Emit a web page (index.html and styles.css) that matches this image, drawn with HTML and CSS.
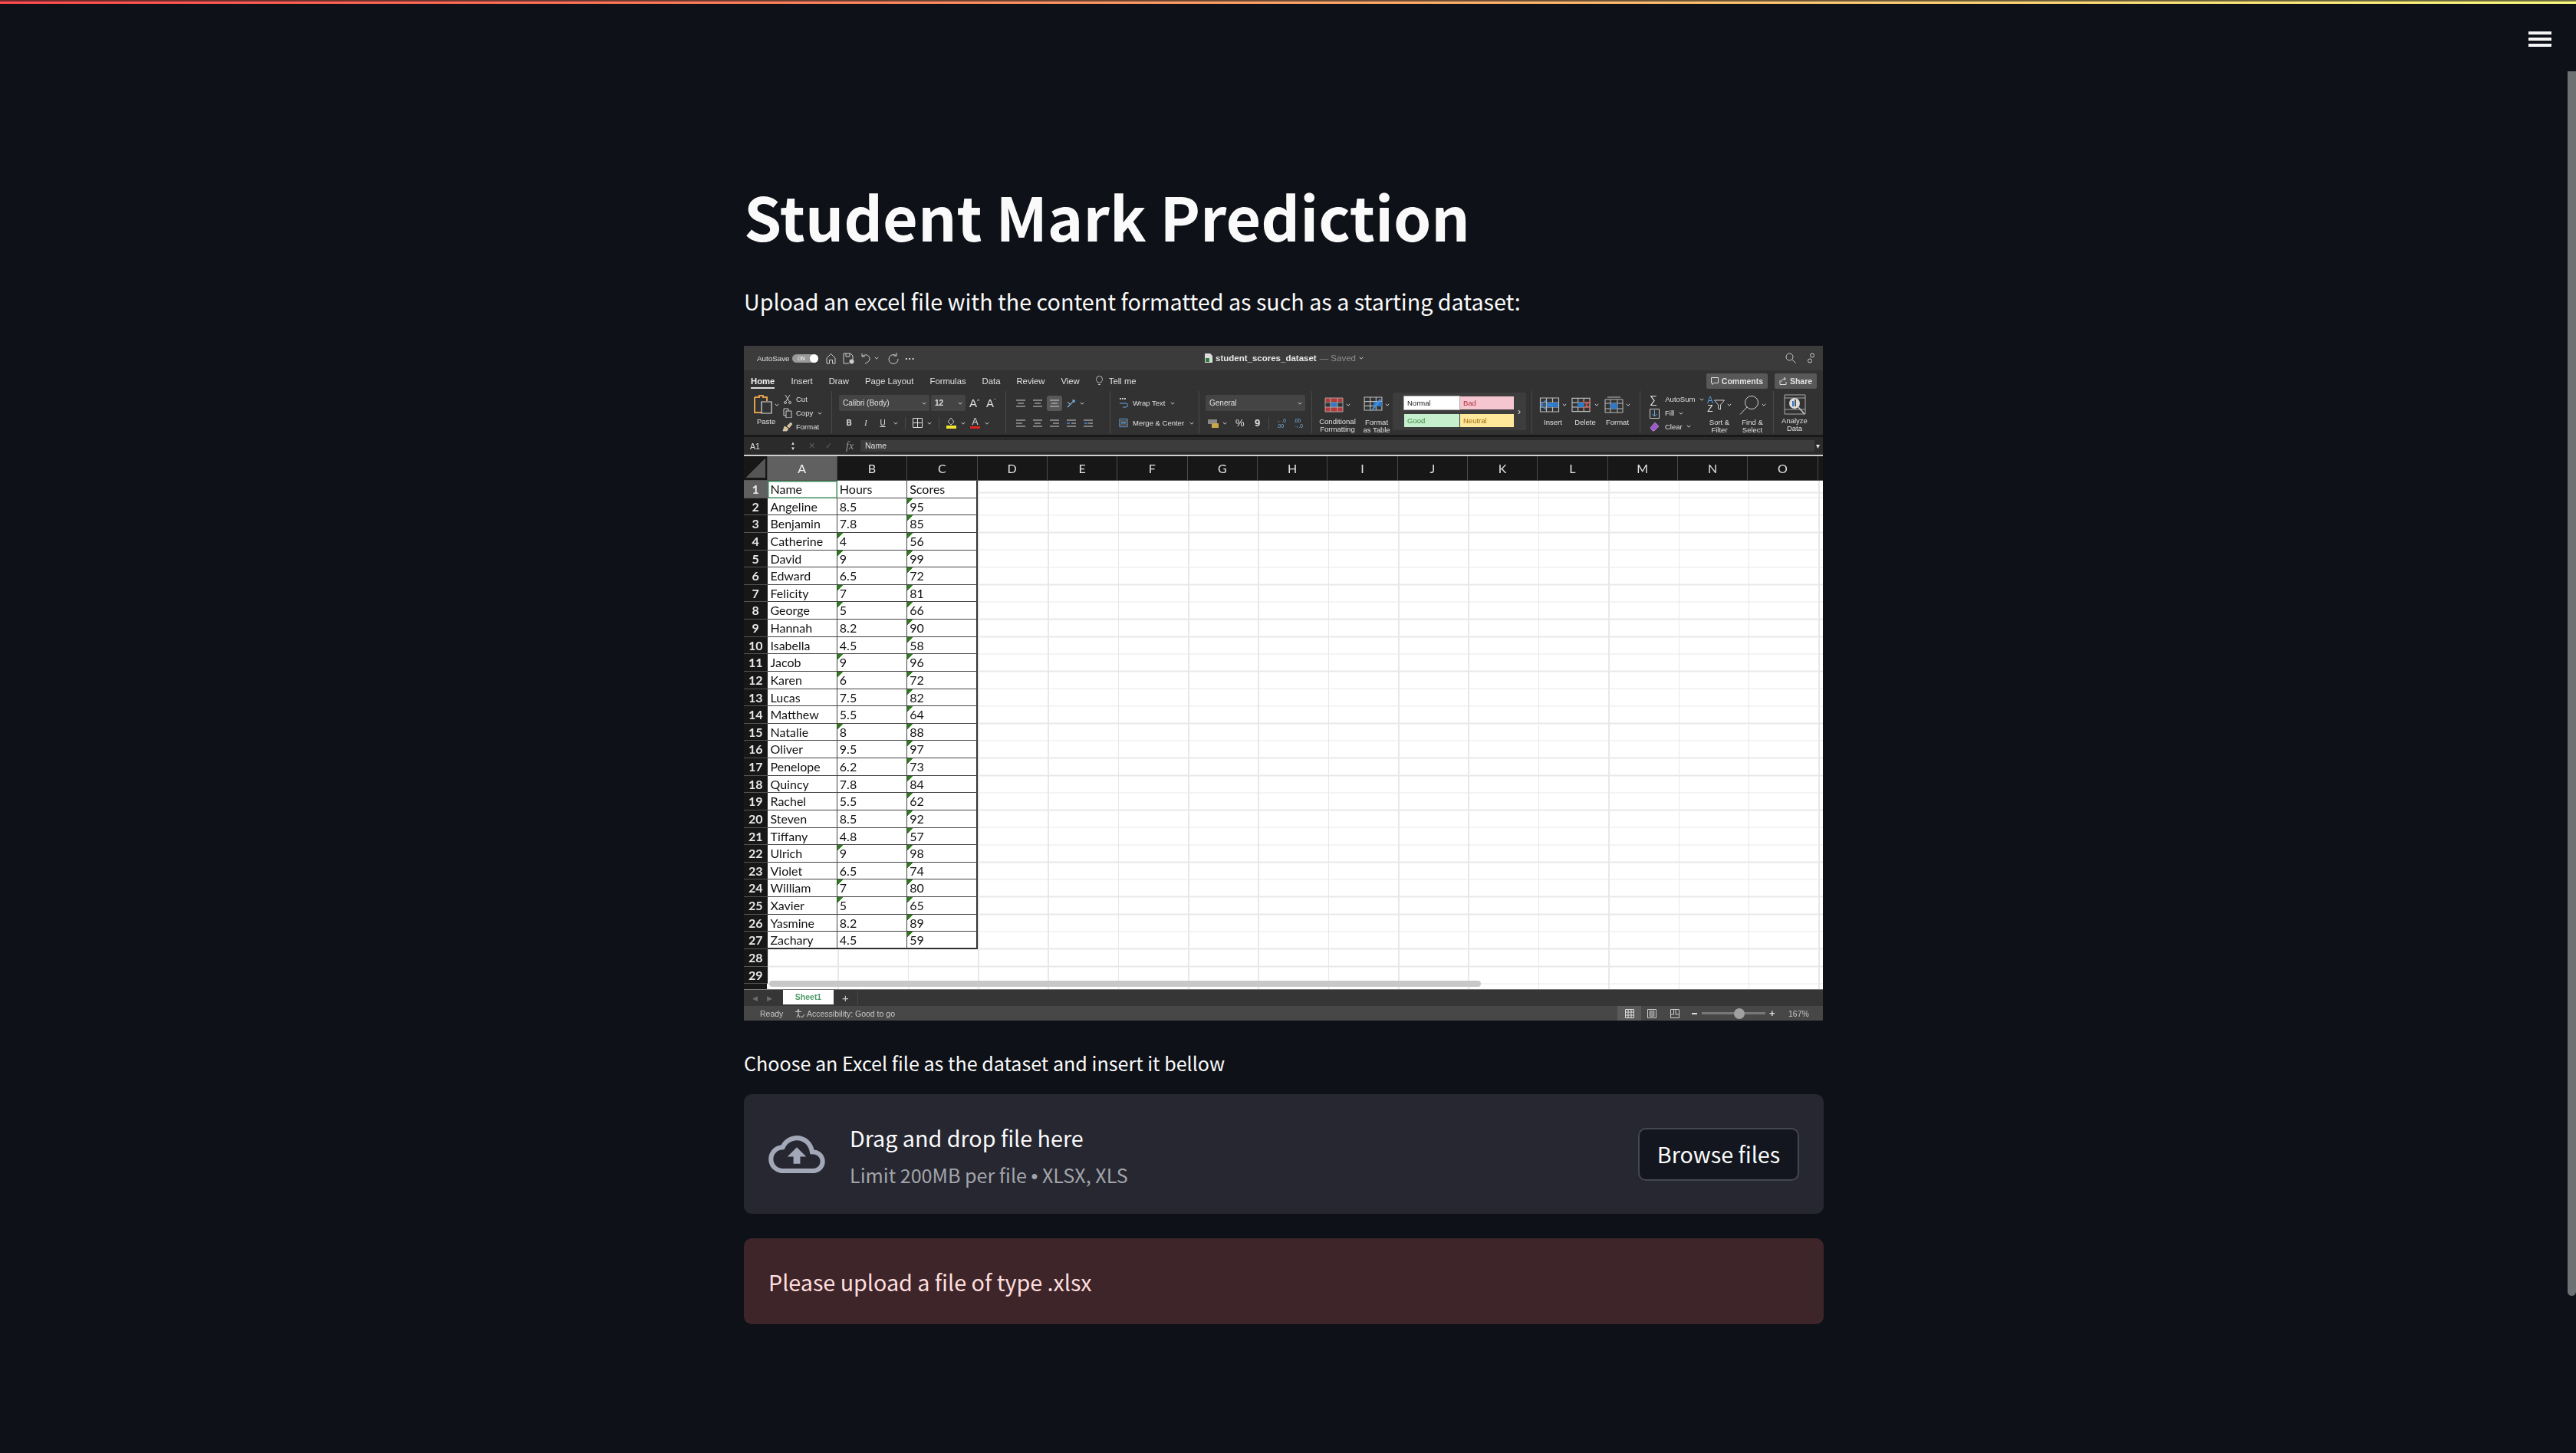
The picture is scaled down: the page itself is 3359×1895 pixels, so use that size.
FILE: index.html
```html
<!DOCTYPE html>
<html>
<head>
    <title>Student Mark Prediction</title>
    <link rel="stylesheet" href="styles.css">
</head>
<body>
    <svg class="defs">
        <symbol id="chev" viewBox="0 0 6 6"><path d="M.8 1.8 3 4.2l2.2-2.4" fill="none" stroke="currentColor" stroke-width="1"/></symbol>
        <symbol id="grid" viewBox="0 0 26 20"><path d="M1 1h24v18H1zM1 7h24M1 13h24M9 1v18M17 1v18" fill="none" stroke="#bbb" stroke-width="1.2"/></symbol>
        <symbol id="a-left" viewBox="0 0 12 12"><path d="M0 2h12M0 6h8M0 10h12" stroke="#ccc" stroke-width="1"/></symbol>
        <symbol id="a-mid" viewBox="0 0 12 12"><path d="M0 2h12M2 6h8M0 10h12" stroke="#ccc" stroke-width="1"/></symbol>
        <symbol id="a-right" viewBox="0 0 12 12"><path d="M0 2h12M4 6h8M0 10h12" stroke="#ccc" stroke-width="1"/></symbol>
    </svg>

    <div class="top-line"></div>
    <div class="top-line-dim"></div>
    <div class="menu-btn"><span></span><span></span><span></span></div>
    <div class="scroll-thumb"></div>

    <div class="app">
        <main class="main">
            <h1>Student Mark Prediction</h1>
            <p class="intro">Upload an excel file with the content formatted as such as a starting dataset:</p>

            <div class="sheet">
                <div class="xl-title">
                    <span class="xl-autosave">AutoSave</span>
                    <span class="xl-toggle"><i>ON</i><b></b></span>
                    <svg class="qa" width="13" height="15" viewBox="0 0 13 15"><path d="M1 7 6.500 1.500 12 7v7H8.500V9.500h-4V14H1z" fill="none" stroke="#ccc"/></svg>
                    <svg class="qa" width="15" height="15" viewBox="0 0 15 15"><path d="M1 1h9l3 3v5M1 1v13h7M4 1v4h5V1" fill="none" stroke="#ccc"/><circle cx="11.500" cy="11.500" r="3" fill="#ccc"/></svg>
                    <svg class="qa" width="12" height="15" viewBox="0 0 12 15"><path d="M1 5c4-4 10-2 10 3 0 3-3 5-6 6M1 1v4h4" fill="none" stroke="#ccc"/></svg>
                    <svg class="chev"><use href="#chev"/></svg>
                    <svg class="qa" width="15" height="15" viewBox="0 0 15 15"><path d="M12 4a6 6 0 1 0 2 4M12 0v4H8" fill="none" stroke="#ccc"/></svg>
                    <span class="xl-dots">···</span>
                    <span class="xl-filename">
                        <svg width="10" height="12" viewBox="0 0 10 12"><path d="M0 0h7l3 3v9H0z" fill="#ddd"/><path d="M1 6h5v5H1z" fill="#2e7d3a"/></svg>
                        <b>student_scores_dataset</b><span>— Saved</span><svg class="chev"><use href="#chev"/></svg>
                    </span>
                    <svg class="qa-search" width="14" height="14" viewBox="0 0 14 14"><circle cx="5.500" cy="5.500" r="4.500" fill="none" stroke="#ccc"/><path d="m9 9 4.500 4.500" stroke="#ccc"/></svg>
                    <svg class="qa-people" width="9" height="14" viewBox="0 0 9 14"><circle cx="6" cy="3.500" r="2.500" fill="none" stroke="#ccc"/><circle cx="3" cy="10.500" r="2.500" fill="none" stroke="#ccc"/></svg>
                </div>

                <div class="xl-tabs">
                    <span class="tab-on">Home</span><span>Insert</span><span>Draw</span><span>Page Layout</span><span>Formulas</span><span>Data</span><span>Review</span><span>View</span>
                    <svg width="9" height="13" viewBox="0 0 9 13"><path d="M2.500 9C1 7 .5 6 .5 4.500a4 4 0 0 1 8 0C8.500 6 8 7 6.500 9zM3 11.500h3" fill="none" stroke="#bbb"/></svg>
                    <span class="tell">Tell me</span>
                    <span class="xl-btn xl-comments">
                        <svg width="10" height="10" viewBox="0 0 10 10"><path d="M.5.500h9v7H4L2 9.500v-2H.5z" fill="none" stroke="#ddd"/></svg>Comments</span>
                    <span class="xl-btn xl-share">
                        <svg width="10" height="10" viewBox="0 0 10 10"><path d="M1 4v5.500h8V6M3 6c0-3 2-4 5-4M6 0l2.500 2L6 4" fill="none" stroke="#ddd"/></svg>Share</span>
                </div>

                <div class="ribbon">
                    <div class="rb-group g-clip">
                        <div class="paste">
                            <div class="paste-top">
                                <svg width="25" height="25" viewBox="0 0 25 25"><path d="M1 3h6V1h5v2h5v5M1 3v20h9" fill="none" stroke="#e2a04a" stroke-width="2"/><path d="M10 9h13v15H10z" fill="#333" stroke="#ddd" stroke-width="1.200"/></svg>
                                <svg class="chev"><use href="#chev"/></svg>
                            </div>
                            <span>Paste</span>
                        </div>
                        <div class="rows3">
                            <div class="rb-line"><svg width="14" height="12" viewBox="0 0 14 12"><path d="m4 0 5 8M10 0 5 8" stroke="#ccc"/><circle cx="4" cy="10" r="1.500" fill="none" stroke="#ccc"/><circle cx="10" cy="10" r="1.500" fill="none" stroke="#ccc"/></svg>Cut</div>
                            <div class="rb-line"><svg width="14" height="13" viewBox="0 0 14 13"><path d="M2 1h6v3M2 1v9h3M5 4h7v9H5z" fill="none" stroke="#ccc"/></svg>Copy <svg class="chev"><use href="#chev"/></svg></div>
                            <div class="rb-line"><svg width="14" height="13" viewBox="0 0 14 13"><path d="m1 12 2-6 5 3-2 3zM6 6l5-5 2 2-4 5" fill="#d9c08a" stroke="#ddd" stroke-width=".7"/></svg>Format</div>
                        </div>
                    </div>

                    <div class="rb-group g-font">
                        <div class="rows2">
                            <div class="rb-row">
                                <span class="rb-box font-name">Calibri (Body)<svg class="chev"><use href="#chev"/></svg></span>
                                <span class="rb-box font-size">12<svg class="chev"><use href="#chev"/></svg></span>
                                <span class="font-grow">A<sup>^</sup></span>
                                <span class="font-shrink">A<sup>ˇ</sup></span>
                            </div>
                            <div class="rb-row font-tools">
                                <span class="ft-b">B</span><span class="ft-i">I</span><span class="ft-u">U</span>
                                <svg class="chev"><use href="#chev"/></svg>
                                <i class="vsep"></i>
                                <svg width="13" height="13" viewBox="0 0 13 13"><path d="M.5.500h12v12H.5zM6.500.500v12M.5 6.500h12" fill="none" stroke="#ddd"/></svg>
                                <svg class="chev"><use href="#chev"/></svg>
                                <i class="vsep"></i>
                                <svg width="13" height="15" viewBox="0 0 13 15"><path d="M6 1 2 6l4 4 4-4z" fill="none" stroke="#ccc"/><path d="M0 11h13v4H0z" fill="#f2e52e"/></svg>
                                <svg class="chev"><use href="#chev"/></svg>
                                <span class="ft-color">A</span>
                                <svg class="chev"><use href="#chev"/></svg>
                            </div>
                        </div>
                    </div>

                    <div class="rb-group g-align">
                        <div class="rows2">
                            <div class="rb-row align-row">
                                <svg><use href="#a-mid"/></svg><svg><use href="#a-mid"/></svg><svg class="hl"><use href="#a-mid"/></svg>
                                <svg width="12" height="12" viewBox="0 0 12 12"><path d="m1 11 9-9M7 2h3v3" fill="none" stroke="#7db7e8" stroke-width="1.200"/><path d="M1 4l3 3" stroke="#ccc"/></svg>
                                <svg class="chev"><use href="#chev"/></svg>
                            </div>
                            <div class="rb-row align-row">
                                <svg><use href="#a-left"/></svg><svg><use href="#a-mid"/></svg><svg><use href="#a-right"/></svg>
                                <svg width="12" height="12" viewBox="0 0 12 12"><path d="M0 2h12M6 6h6M0 10h12" stroke="#ccc"/><path d="M0 6h4" stroke="#4a90d9" stroke-width="1.500"/></svg>
                                <svg width="12" height="12" viewBox="0 0 12 12"><path d="M0 2h12M6 6h6M0 10h12" stroke="#ccc"/><path d="M1 6h4" stroke="#4a90d9" stroke-width="1.500"/></svg>
                            </div>
                        </div>
                    </div>

                    <div class="rb-group g-wrap">
                        <div class="rows2">
                            <div class="rb-row wrap-row">
                                <svg width="12" height="13" viewBox="0 0 12 13"><path d="M1 7h8a2 2 0 0 1 0 5H5" fill="none" stroke="#6aa9df"/><path d="M1 1h8" stroke="#ccc" stroke-width="2" stroke-dasharray="2 1"/></svg>Wrap Text <svg class="chev"><use href="#chev"/></svg>
                            </div>
                            <div class="rb-row wrap-row">
                                <svg width="12" height="13" viewBox="0 0 14 14"><path d="M1 1h12v12H1z" fill="none" stroke="#6aa9df"/><path d="M3 7h8" stroke="#6aa9df" stroke-width="2"/><path d="M1 4h12M1 10h12" stroke="#888"/></svg>Merge &amp; Center <svg class="chev"><use href="#chev"/></svg>
                            </div>
                        </div>
                    </div>

                    <div class="rb-group g-number">
                        <div class="rows2">
                            <div class="rb-row">
                                <span class="rb-box num-format">General<svg class="chev"><use href="#chev"/></svg></span>
                            </div>
                            <div class="rb-row num-tools">
                                <svg width="14" height="12" viewBox="0 0 14 12"><path d="M0 1h12v6H0z" fill="#888"/><path d="M5 6h9v6H5z" fill="#c9a64a"/></svg>
                                <svg class="chev"><use href="#chev"/></svg>
                                <span class="num-pct">%</span>
                                <span class="num-comma">9</span>
                                <i class="vsep"></i>
                                <span class="num-dec">←.0<br>.00</span>
                                <span class="num-dec">.00<br>→.0</span>
                            </div>
                        </div>
                    </div>

                    <div class="rb-group g-styles">
                        <div class="big big-cond">
                            <div class="big-icon">
                                <svg width="25" height="20" viewBox="0 0 25 20"><path d="M1 1h23v18H1z" fill="#333"/><path d="M1 1h23v5H1zM1 13h23v6H1z" fill="#b23a3a"/><path d="M8 7h9v6H8z" fill="#2f78c4"/><path d="M1 1h23v18H1zM1 7h23M1 13h23M8 1v18M17 1v18" fill="none" stroke="#bbb" stroke-width=".8"/></svg>
                                <svg class="chev"><use href="#chev"/></svg>
                            </div>
                            <span>Conditional<br>Formatting</span>
                        </div>
                        <div class="big big-table">
                            <div class="big-icon">
                                <svg width="25" height="22" viewBox="0 0 25 22"><use href="#grid" width="25" height="19"/><path d="M13 7h11v6H13z" fill="#2f78c4"/><path d="m9 20 3-5 9-12 2 2-9 11z" fill="#4a90d9"/></svg>
                                <svg class="chev"><use href="#chev"/></svg>
                            </div>
                            <span>Format<br>as Table</span>
                        </div>
                        <div class="gallery">
                            <div class="gallery-grid">
                                <span class="st-normal">Normal</span><span class="st-bad">Bad</span>
                                <span class="st-good">Good</span><span class="st-neutral">Neutral</span>
                            </div>
                            <span class="gallery-more">›</span>
                        </div>
                    </div>

                    <div class="rb-group g-cells">
                        <div class="big big-cell">
                            <div class="big-icon">
                                <svg width="27" height="20" viewBox="0 0 27 20"><use href="#grid" width="27" height="20"/><path d="M10 7h15v6H10z" fill="#2f78c4"/><path d="M9 4 2 10l7 6" fill="none" stroke="#4a90d9" stroke-width="1.500"/><path d="M2 10h16" stroke="#4a90d9"/></svg>
                                <svg class="chev"><use href="#chev"/></svg>
                            </div>
                            <span>Insert</span>
                        </div>
                        <div class="big big-cell">
                            <div class="big-icon">
                                <svg width="27" height="20" viewBox="0 0 27 20"><use href="#grid" width="25" height="20"/><path d="M8 7h9v6H8z" fill="#2f78c4"/><path d="m15 4 10 12M25 4 15 16" stroke="#d04a3a" stroke-width="1.300"/></svg>
                                <svg class="chev"><use href="#chev"/></svg>
                            </div>
                            <span>Delete</span>
                        </div>
                        <div class="big big-cell">
                            <div class="big-icon">
                                <svg width="25" height="22" viewBox="0 0 25 22"><path d="M4 1h17" stroke="#bbb"/><path d="M1 4h23v17H1zM1 9h23M1 16h23M8 4v17M17 4v17" fill="none" stroke="#bbb"/><path d="M8 9h9v7H8z" fill="#2f78c4"/></svg>
                                <svg class="chev"><use href="#chev"/></svg>
                            </div>
                            <span>Format</span>
                        </div>
                    </div>

                    <div class="rb-group g-edit">
                        <div class="rows3 edit-list">
                            <div class="rb-line"><span class="sigma">∑</span>AutoSum <svg class="chev"><use href="#chev"/></svg></div>
                            <div class="rb-line"><svg width="13" height="14" viewBox="0 0 13 14"><path d="M.5 1.500h12v12H.5z" fill="none" stroke="#ccc"/><path d="M6.500 3v8M3.500 8l3 3 3-3" fill="none" stroke="#6aa9df"/></svg>Fill <svg class="chev"><use href="#chev"/></svg></div>
                            <div class="rb-line"><svg width="13" height="13" viewBox="0 0 13 13"><path d="m1 8 6-7 5 5-6 6H4z" fill="#9b59c9" stroke="#c69ae0" stroke-width=".7"/></svg>Clear <svg class="chev"><use href="#chev"/></svg></div>
                        </div>
                        <div class="big big-sort">
                            <div class="big-icon">
                                <span class="az"><i>A</i><b>Z</b></span>
                                <svg width="14" height="14" viewBox="0 0 14 14"><path d="M.5 1h13L8.500 7v6l-3-1V7z" fill="none" stroke="#ccc"/></svg>
                                <svg class="chev"><use href="#chev"/></svg>
                            </div>
                            <span>Sort &amp;<br>Filter</span>
                        </div>
                        <div class="big big-find">
                            <div class="big-icon">
                                <svg width="26" height="25" viewBox="0 0 26 25"><circle cx="16" cy="9" r="8.500" fill="none" stroke="#ccc"/><path d="M10 15 1 24.500" stroke="#ccc"/></svg>
                                <svg class="chev"><use href="#chev"/></svg>
                            </div>
                            <span>Find &amp;<br>Select</span>
                        </div>
                    </div>

                    <div class="rb-group g-analyze">
                        <div class="big big-analyze">
                            <svg width="29" height="27" viewBox="0 0 29 27"><path d="M1 1h27v25H1zM1 5h27M1 20h27" fill="none" stroke="#aaa"/><circle cx="14" cy="12" r="7" fill="#ddd"/><path d="M11 9h2v7h-2z" fill="#2f78c4"/><path d="M14 7h2v9h-2z" fill="#555"/><path d="m19 17 8 9" stroke="#ccc" stroke-width="1.500"/></svg>
                            <span>Analyze<br>Data</span>
                        </div>
                    </div>
                </div>

                <div class="xl-formula">
                    <span class="cell-ref">A1</span>
                    <span class="stepper">▲<br>▼</span>
                    <span class="fx-x">✕</span>
                    <span class="fx-ok">✓</span>
                    <span class="fx">fx</span>
                    <span class="fx-field">Name</span>
                    <span class="fx-down">▾</span>
                </div>

                <div class="col-head">
                    <span class="corner"></span>
                    <span class="col-on">A</span><span>B</span><span>C</span><span>D</span><span>E</span><span>F</span><span>G</span><span>H</span><span>I</span><span>J</span><span>K</span><span>L</span><span>M</span><span>N</span><span>O</span><span class="col-end"></span>
                </div>

                <div class="sheet-body">
                    <div class="row row-first"><b>1</b><span class="cell-sel">Name</span><span>Hours</span><span>Scores</span></div>
                    <div class="row"><b>2</b><span>Angeline</span><span>8.5</span><span class="flag">95</span></div>
                    <div class="row"><b>3</b><span>Benjamin</span><span>7.8</span><span class="flag">85</span></div>
                    <div class="row"><b>4</b><span>Catherine</span><span class="flag">4</span><span class="flag">56</span></div>
                    <div class="row"><b>5</b><span>David</span><span class="flag">9</span><span class="flag">99</span></div>
                    <div class="row"><b>6</b><span>Edward</span><span>6.5</span><span class="flag">72</span></div>
                    <div class="row"><b>7</b><span>Felicity</span><span class="flag">7</span><span class="flag">81</span></div>
                    <div class="row"><b>8</b><span>George</span><span class="flag">5</span><span class="flag">66</span></div>
                    <div class="row"><b>9</b><span>Hannah</span><span>8.2</span><span class="flag">90</span></div>
                    <div class="row"><b>10</b><span>Isabella</span><span>4.5</span><span class="flag">58</span></div>
                    <div class="row"><b>11</b><span>Jacob</span><span class="flag">9</span><span class="flag">96</span></div>
                    <div class="row"><b>12</b><span>Karen</span><span class="flag">6</span><span class="flag">72</span></div>
                    <div class="row"><b>13</b><span>Lucas</span><span>7.5</span><span class="flag">82</span></div>
                    <div class="row"><b>14</b><span>Matthew</span><span>5.5</span><span class="flag">64</span></div>
                    <div class="row"><b>15</b><span>Natalie</span><span class="flag">8</span><span class="flag">88</span></div>
                    <div class="row"><b>16</b><span>Oliver</span><span>9.5</span><span class="flag">97</span></div>
                    <div class="row"><b>17</b><span>Penelope</span><span>6.2</span><span class="flag">73</span></div>
                    <div class="row"><b>18</b><span>Quincy</span><span>7.8</span><span class="flag">84</span></div>
                    <div class="row"><b>19</b><span>Rachel</span><span>5.5</span><span class="flag">62</span></div>
                    <div class="row"><b>20</b><span>Steven</span><span>8.5</span><span class="flag">92</span></div>
                    <div class="row"><b>21</b><span>Tiffany</span><span>4.8</span><span class="flag">57</span></div>
                    <div class="row"><b>22</b><span>Ulrich</span><span class="flag">9</span><span class="flag">98</span></div>
                    <div class="row"><b>23</b><span>Violet</span><span>6.5</span><span class="flag">74</span></div>
                    <div class="row"><b>24</b><span>William</span><span class="flag">7</span><span class="flag">80</span></div>
                    <div class="row"><b>25</b><span>Xavier</span><span class="flag">5</span><span class="flag">65</span></div>
                    <div class="row"><b>26</b><span>Yasmine</span><span>8.2</span><span class="flag">89</span></div>
                    <div class="row row-last"><b>27</b><span>Zachary</span><span>4.5</span><span class="flag">59</span></div>
                    <div class="row row-empty"><b>28</b></div>
                    <div class="row row-empty"><b>29</b></div>
                    <div class="h-thumb"></div>
                </div>

                <div class="xl-sheets">
                    <span class="sheet-arrow">◀</span><span class="sheet-arrow">▶</span>
                    <span class="sheet-tab">Sheet1</span>
                    <span class="sheet-add">+</span>
                </div>

                <div class="xl-status">
                    <span class="st-ready">Ready</span>
                    <svg width="13" height="12" viewBox="0 0 13 12"><circle cx="5" cy="1.500" r="1.200" fill="#ccc"/><path d="M1 3.500h8M5 4v3l-2 4M5 7l2 4" fill="none" stroke="#ccc"/><path d="m8 9 2 2 3-4" fill="none" stroke="#ccc"/></svg>
                    <span class="st-access">Accessibility: Good to go</span>
                    <span class="view-btn">
                        <svg width="12" height="12" viewBox="0 0 12 12"><path d="M.5.500h11v11H.5zM4 .500v11M8 .500v11M.5 4h11M.5 8h11" fill="none" stroke="#ddd"/></svg>
                    </span>
                    <svg class="view-ico" width="12" height="12" viewBox="0 0 12 12"><path d="M.5.500h11v11H.5z" fill="none" stroke="#ccc"/><path d="M3 2.500h6v7H3z" fill="#888" stroke="#ccc" stroke-width=".6"/></svg>
                    <svg class="view-ico" width="12" height="12" viewBox="0 0 12 12"><path d="M.5.500h11v11H.5zM.5 7h4V.5M7 .5V7h4.500" fill="none" stroke="#ccc"/></svg>
                    <span class="zoom-minus"></span>
                    <span class="zoom-track"><i></i></span>
                    <span class="zoom-plus">+</span>
                    <span class="zoom-val">167%</span>
                </div>
            </div>

            <label class="up-label">Choose an Excel file as the dataset and insert it bellow</label>
            <section class="uploader">
                <svg class="cloud" width="74" height="49" viewBox="0 4 24 16"><path fill="#a3a8b8" d="M19.350 10.040C18.670 6.590 15.640 4 12 4 9.110 4 6.600 5.640 5.350 8.040 2.340 8.360 0 10.910 0 14c0 3.310 2.690 6 6 6h13c2.760 0 5-2.240 5-5 0-2.640-2.050-4.780-4.650-4.960zM19 18H6c-2.210 0-4-1.790-4-4 0-2.050 1.530-3.760 3.560-3.970l1.070-.11.500-.95C8.080 7.140 9.940 6 12 6c2.620 0 4.880 1.860 5.390 4.430l.3 1.500 1.530.11c1.560.1 2.780 1.410 2.780 2.960 0 1.650-1.350 3-3 3zM8 13h2.550v3h2.900v-3H16l-4-4z"/></svg>
                <div class="up-text">
                    <span class="up-title">Drag and drop file here</span>
                    <small class="up-limit">Limit 200MB per file <span class="dot">•</span> XLSX, XLS</small>
                </div>
                <button class="browse">Browse files</button>
            </section>
            <div class="alert">Please upload a file of type .xlsx</div>
        </main>
    </div>
</body>
</html>
```

FILE: styles.css
```css
html, body {
  margin: 0;
  height: 1895px;
  overflow: hidden;
  background-color: #0e1117;
}

body {
  position: relative;
  color: #fafafa;
  font-family: "Noto Sans CJK SC", "Noto Sans", sans-serif;
}

.defs {
  display: none;
}

/* things lying over the page */
.top-line,
.top-line-dim {
  position: absolute;
  left: 0;
  right: 0;
  background: linear-gradient(90deg, #ff4b4b, #fffd80);
}

.top-line {
  top: 2px;
  height: 3px;
}

.top-line-dim {
  top: 0;
  height: 2px;
  opacity: 0.4;
}

.menu-btn {
  position: absolute;
  top: 41px;
  left: 3297px;
  width: 30px;
  display: flex;
  flex-direction: column;
  gap: 4px;
}

.menu-btn span {
  height: 4px;
  background-color: #f5f5f5;
}

.scroll-thumb {
  position: absolute;
  top: 93px;
  left: 3348px;
  width: 11px;
  height: 1597px;
  background-color: #6f7074;
  border-radius: 0 0 6px 6px;
}

/* main column */
.app {
  width: 3348px;
}

.main {
  width: 1408px;
  margin: 0 auto;
}

h1 {
  margin: 228px 0 0;
  font-size: 78.900px;
  line-height: 106px;
  font-weight: 700;
}

.intro {
  margin: 35px 0 0;
  font-size: 28.700px;
  line-height: 48px;
}

.up-label {
  display: block;
  margin-top: 35px;
  font-size: 25.100px;
  line-height: 40px;
}

.uploader {
  display: flex;
  align-items: center;
  height: 156px;
  margin-top: 21px;
  padding: 0 32px;
  box-sizing: border-box;
  background-color: #262730;
  border-radius: 10px;
}

.cloud {
  margin-right: 32px;
}

.up-text {
  display: flex;
  flex-direction: column;
  gap: 6px;
  padding-top: 6px;
}

.up-title {
  font-size: 28.700px;
  line-height: 44px;
}

.up-limit {
  font-size: 25.100px;
  line-height: 40px;
  color: #a3a4aa;
}

.dot {
  font-family: "Liberation Sans", sans-serif;
}

.browse {
  margin-left: auto;
  width: 210px;
  height: 69px;
  background-color: #13161f;
  border: 2px solid #45464e;
  border-radius: 10px;
  color: #fafafa;
  font-family: inherit;
  font-size: 28.700px;
  line-height: 40px;
}

.alert {
  display: flex;
  align-items: center;
  height: 112px;
  margin-top: 32px;
  padding: 0 32px;
  box-sizing: border-box;
  background-color: #3d2529;
  border-radius: 10px;
  color: #ffdede;
  font-size: 28.700px;
}

/* the excel picture */
.sheet {
  margin-top: 34px;
  height: 880px;
  width: 1407px;
  overflow: hidden;
  background-color: #333;
  color: #e0e0e0;
  font-family: "Liberation Sans", Arial, sans-serif;
  font-size: 9.500px;
  filter: blur(0.35px);
}

.chev {
  width: 6px;
  height: 6px;
  flex: none;
  color: #ccc;
}

.xl-title {
  display: flex;
  align-items: center;
  height: 32px;
  padding-left: 17px;
  background-color: #3b3b3b;
}

.xl-autosave {
  width: 46px;
  font-size: 9.800px;
}

.xl-toggle {
  display: flex;
  align-items: center;
  justify-content: space-between;
  width: 34px;
  height: 11px;
  background-color: #999;
  border-radius: 6px;
  margin-right: 10px;
}

.xl-toggle i {
  margin-left: 7px;
  font-size: 6.500px;
  font-style: normal;
  color: #fff;
}

.xl-toggle b {
  width: 11px;
  height: 11px;
  background-color: #fff;
  border-radius: 50%;
}

.qa {
  margin-right: 9px;
  flex: none;
}

.xl-title .chev {
  margin: 0 11px 0 -4px;
}

.xl-dots {
  margin-left: -1px;
  font-size: 13px;
  font-weight: bold;
  width: 391px;
}

.xl-filename {
  display: flex;
  align-items: center;
  gap: 4px;
  font-size: 11.500px;
  color: #8f8f8f;
}

.xl-filename b {
  color: #e8e8e8;
}

.xl-filename .chev {
  margin: 0;
}

.qa-search {
  margin-left: 550px;
}

.qa-people {
  margin-left: 15px;
}

.xl-tabs {
  display: flex;
  align-items: center;
  gap: 21px;
  height: 27px;
  padding-left: 9px;
  box-sizing: border-box;
  background-color: #323232;
  font-size: 11.300px;
}

.tab-on {
  font-weight: bold;
  color: #f0f0f0;
  border-bottom: 2px solid #ddd;
  padding-bottom: 2px;
  margin-top: 4px;
}

.xl-tabs svg {
  margin-right: -13px;
  flex: none;
}

.xl-btn {
  display: flex;
  align-items: center;
  gap: 4px;
  justify-content: center;
  height: 20px;
  background-color: #585858;
  border-radius: 2px;
  font-size: 10.500px;
  font-weight: bold;
  color: #e2e2e2;
}

.xl-btn svg {
  margin: 0;
}

.xl-comments {
  width: 80px;
  margin-left: auto;
  margin-right: -12px;
}

.xl-share {
  width: 55px;
  margin-right: 8px;
}

.ribbon {
  display: flex;
  height: 60px;
  box-sizing: border-box;
  background-color: #323232;
  border-bottom: 3px solid #191919;
}

.rb-group {
  display: flex;
  flex: none;
  box-sizing: border-box;
  height: 55px;
  border-right: 1px solid #4a4a4a;
}

.g-clip {
  width: 115px;
  padding-left: 13px;
}

.g-font {
  width: 227px;
  padding-left: 9px;
}

.g-align {
  width: 136px;
  padding-left: 13px;
}

.g-wrap {
  width: 116px;
  padding-left: 11px;
}

.g-number {
  width: 147px;
  padding-left: 8px;
}

.g-styles {
  width: 287px;
  padding-left: 5px;
}

.g-cells {
  width: 141px;
  padding-left: 6px;
}

.g-edit {
  width: 174px;
  padding-left: 12px;
}

.g-analyze {
  width: 54px;
  border-right: 0;
}

.paste {
  width: 37px;
  display: flex;
  flex-direction: column;
  padding-top: 5px;
}

.paste-top {
  display: flex;
  align-items: center;
  gap: 2px;
  height: 25px;
}

.paste span {
  margin: 4px 0 0 4px;
}

.rows3 {
  display: flex;
  flex-direction: column;
  padding-top: 2px;
}

.rb-line {
  display: flex;
  align-items: center;
  gap: 3px;
  height: 18.500px;
  white-space: pre;
}

.rb-line svg:first-child {
  margin-right: 1px;
}

.rows2 {
  display: flex;
  flex-direction: column;
  gap: 5px;
  padding-top: 5px;
}

.rb-row {
  display: flex;
  align-items: center;
  height: 21px;
}

.rb-box {
  display: flex;
  align-items: center;
  justify-content: space-between;
  height: 21px;
  box-sizing: border-box;
  padding: 0 4px 0 5px;
  background-color: #444;
  border-radius: 2px;
  font-size: 10px;
}

.font-name {
  width: 118px;
}

.font-size {
  width: 45px;
  margin-left: 2px;
  font-weight: bold;
}

.font-grow,
.font-shrink {
  font-size: 15px;
  margin-left: 5px;
  width: 17px;
}

.font-grow sup,
.font-shrink sup {
  font-size: 7px;
}

.font-tools {
  gap: 6px;
  padding-left: 5px;
}

.font-tools span {
  width: 16px;
  text-align: center;
  font-size: 10px;
}

.ft-b {
  font-weight: bold;
}

.ft-i {
  font-style: italic;
  font-family: "Liberation Serif", serif;
}

.ft-u {
  text-decoration: underline;
}

.font-tools .ft-color {
  width: 13px;
  font-size: 12px;
  border-bottom: 3px solid #d9261c;
  line-height: 11px;
}

.vsep {
  width: 1px;
  height: 16px;
  margin: 0 3px;
  flex: none;
  background-color: #4a4a4a;
}

.align-row {
  gap: 10px;
}

.align-row svg {
  width: 12px;
  height: 12px;
  flex: none;
}

.align-row .chev {
  width: 6px;
  height: 6px;
  margin-left: -5px;
}

.align-row .hl {
  background-color: #585858;
  box-shadow: 0 0 0 4px #585858;
  border-radius: 1px;
}

.wrap-row {
  white-space: pre;
  gap: 4px;
}

.wrap-row svg:first-child {
  margin-right: 2px;
}

.num-format {
  width: 130px;
  font-size: 10px;
}

.num-tools {
  gap: 5px;
  padding-left: 3px;
}

.num-pct {
  font-size: 13px;
  margin-left: 6px;
  width: 14px;
}

.num-comma {
  font-size: 13px;
  font-weight: bold;
  margin-left: 6px;
  width: 8px;
}

.num-tools .vsep {
  margin: 0 2px 0 5px;
}

.num-dec {
  width: 14px;
  margin-left: 3px;
  font-size: 6.500px;
  line-height: 7px;
  color: #7db7e8;
}

/* icon on top, label of one or two lines under it */
.big {
  display: flex;
  flex-direction: column;
  align-items: center;
  text-align: center;
  line-height: 10px;
  padding-top: 7px;
  flex: none;
}

.big-icon {
  display: flex;
  align-items: center;
  gap: 3px;
  height: 22px;
  margin-bottom: 7px;
}

.big-cond {
  width: 56px;
}

.big-table {
  width: 40px;
  margin-left: 3px;
}

.big-cell {
  width: 42px;
}

.edit-list {
  width: 71px;
  flex: none;
}

.big-sort {
  width: 40px;
}

.big-find {
  width: 46px;
}

.big-analyze {
  width: 54px;
  padding-top: 4px;
}

.big-analyze svg {
  margin-bottom: 3px;
}

.gallery {
  display: flex;
  align-items: center;
  width: 174px;
  height: 49px;
  margin: 2px 0 0 1px;
  padding-left: 15px;
  box-sizing: border-box;
  background-color: #3d3d3d;
  border-radius: 3px;
}

.gallery-grid {
  display: grid;
  grid-template-columns: 72px 70px;
  grid-auto-rows: 17px;
  gap: 6px 1px;
  font-size: 9.500px;
}

.gallery-grid span {
  padding-left: 4px;
  line-height: 17px;
}

.st-normal {
  background-color: #fff;
  color: #222;
  outline: 1px solid #aaa;
}

.st-bad {
  background-color: #f5c6cf;
  color: #b03040;
}

.st-good {
  background-color: #c6efce;
  color: #3b8a3e;
}

.st-neutral {
  background-color: #ffe89a;
  color: #9c6a10;
}

.gallery-more {
  margin-left: 5px;
  font-size: 12px;
}

.sigma {
  width: 14px;
  font-size: 14px;
  margin-right: 4px;
}

.edit-list .rb-line svg:first-child {
  margin-right: 4px;
}

.az {
  display: flex;
  flex-direction: column;
  line-height: 11px;
  font-size: 12px;
  margin-right: -2px;
}

.az i {
  font-style: normal;
  color: #5a9fe0;
}

.az b {
  font-weight: normal;
}

.xl-formula {
  display: flex;
  align-items: center;
  height: 23px;
  background-color: #2b2b2b;
  font-size: 10.500px;
}

.cell-ref {
  width: 61px;
  padding-left: 8px;
  box-sizing: border-box;
}

.stepper {
  width: 23px;
  font-size: 6px;
  line-height: 7px;
}

.fx-x {
  width: 22px;
  color: #5e5e5e;
  font-size: 11px;
}

.fx-ok {
  width: 27px;
  color: #5e5e5e;
  font-size: 11px;
}

.fx {
  width: 19px;
  font-family: "Liberation Serif", serif;
  font-style: italic;
  font-size: 14px;
  color: #999;
}

.fx-field {
  width: 1244px;
  height: 15px;
  line-height: 15px;
  padding-left: 6px;
  box-sizing: border-box;
  background-color: #3c3c3c;
}

.fx-down {
  margin-left: 2px;
  font-size: 10px;
}

/* grid */
.col-head {
  display: grid;
  grid-template-columns: 30.500px repeat(15, 91.350px) 1fr;
  height: 34px;
  box-sizing: border-box;
  border-top: 2px solid #cfcfcf;
  background-color: #171717;
  color: #e0e0e0;
  font-family: Lato, sans-serif;
  font-size: 16px;
}

.col-head span {
  display: flex;
  align-items: center;
  justify-content: center;
  border-right: 1px solid #4a4a4a;
  border-bottom: 1px solid #555;
}

.col-head .col-on {
  background-color: #606060;
  color: #f2f2f2;
}

.col-head .corner {
  background: linear-gradient(135deg, transparent 50%, #555 50%) 2px 2px / 26px 26px no-repeat;
}

.col-head .col-end {
  border-right: 0;
}

.sheet-body {
  position: relative;
  height: 663px;
  overflow: hidden;
  background-color: #fff;
  background-image:
    linear-gradient(90deg, #171717 30.500px, transparent 30.500px),
    repeating-linear-gradient(90deg, #e8e8e8 0 1.500px, transparent 1.500px 91.350px),
    repeating-linear-gradient(#e8e8e8 0 1.500px, transparent 1.500px 22.630px);
  background-size: 100% 100%, calc(100% - 30.500px) 100%, 100% 100%;
  background-position: 0 0, 30.500px 0, 0 21.500px;
  background-repeat: no-repeat, no-repeat, repeat;
  color: #111;
  font-family: Lato, sans-serif;
  font-size: 16px;
}

.row {
  display: grid;
  grid-template-columns: 30.500px 91.350px 91.350px 91.350px;
  height: 22.630px;
  line-height: 21px;
}

.row b {
  background-color: #171717;
  border-bottom: 1px solid #555;
  box-sizing: border-box;
  color: #e8e8e8;
  font-weight: 700;
  font-size: 16px;
  text-align: center;
}

.row span {
  box-sizing: border-box;
  padding-left: 3px;
  background-color: #fff;
  border-right: 1px solid #444;
  border-bottom: 1px solid #444;
}

.row span:first-of-type {
  padding-left: 4px;
}

.row span:last-child {
  border-right: 2px solid #333;
}

.row-first b {
  background-color: #606060;
}

.row-first .cell-sel {
  box-shadow: inset 0 0 0 1.500px #3f8a5c;
  border: 0;
}

.row-last span {
  border-bottom: 2px solid #333;
}

.row-empty {
  grid-template-columns: 30.500px;
}

.row .flag {
  background-image: linear-gradient(135deg, #2f7d1e 50%, transparent 50%);
  background-size: 8px 8px;
  background-repeat: no-repeat;
}

.h-thumb {
  position: absolute;
  left: 33px;
  top: 652px;
  width: 928px;
  height: 8px;
  background-color: #c8c8c8;
  border-radius: 4px;
}

.xl-sheets {
  display: flex;
  align-items: center;
  height: 22px;
  background-color: #363636;
  color: #6d6d6d;
  border-top: 1px solid #777;
  box-sizing: border-box;
}

.sheet-arrow {
  width: 24px;
  font-size: 9px;
  padding-left: 11px;
  box-sizing: border-box;
}

.sheet-arrow + .sheet-arrow {
  padding-left: 6px;
  width: 14px;
}

.sheet-tab {
  width: 66px;
  height: 19px;
  margin: 0 0 2px 13px;
  background-color: #fff;
  color: #4f9a6c;
  font-size: 10.500px;
  font-weight: bold;
  text-align: center;
  line-height: 19px;
}

.sheet-add {
  margin-left: 10px;
  width: 22px;
  padding-right: 10px;
  border-right: 1px solid #4a4a4a;
  color: #ccc;
  font-size: 15px;
  text-align: center;
  box-sizing: border-box;
  line-height: 19px;
}

.xl-status {
  display: flex;
  align-items: center;
  height: 19px;
  background-color: #474747;
  color: #c4c4c4;
  font-size: 10.500px;
}

.st-ready {
  width: 45px;
  margin-left: 21px;
}

.st-access {
  width: 1057px;
  margin-left: 3px;
}

.view-btn {
  display: flex;
  align-items: center;
  justify-content: center;
  width: 31px;
  height: 19px;
  background-color: #5a5a5a;
}

.view-ico {
  margin-left: 18px;
}

.view-btn + .view-ico {
  margin-left: 8px;
}

.zoom-minus {
  width: 7px;
  height: 2px;
  margin-left: 16px;
  background-color: #ddd;
}

.zoom-track {
  display: flex;
  align-items: center;
  width: 83px;
  height: 3px;
  margin-left: 6px;
  background-color: #777;
}

.zoom-track i {
  width: 14px;
  height: 14px;
  margin-left: 42px;
  background-color: #a0a0a0;
  border-radius: 50%;
}

.zoom-plus {
  margin-left: 5px;
  width: 9px;
  color: #ddd;
  font-size: 13px;
  font-weight: bold;
}

.zoom-val {
  margin-left: 16px;
}
```
